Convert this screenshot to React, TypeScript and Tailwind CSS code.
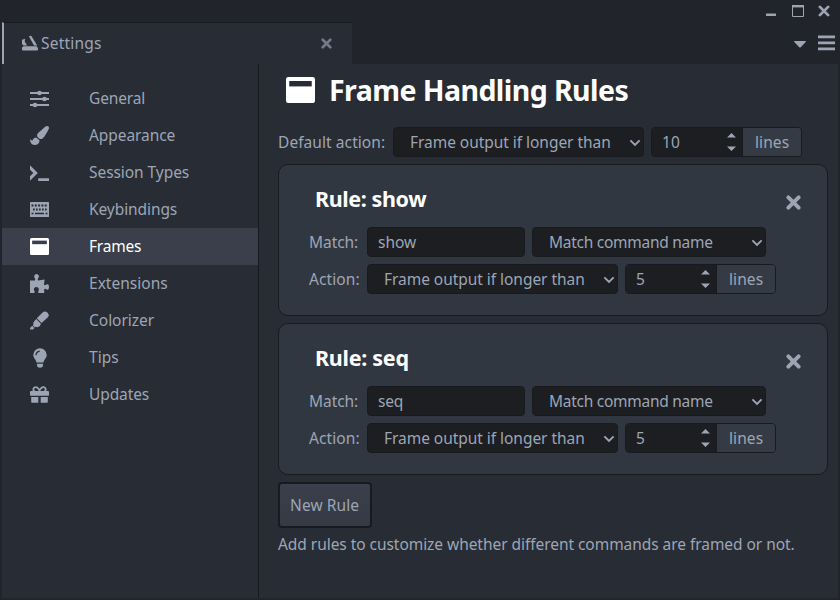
import React, { useLayoutEffect, useRef, useState } from "react";
import { FaPaintBrush, FaGift } from "react-icons/fa";

/** One line of text, tracked so that it fills the given advance width. */
function Line({ w, children, className = "" }: { w: number; children: string; className?: string }) {
  const ref = useRef<HTMLSpanElement>(null);
  const [tracking, setTracking] = useState(0);
  useLayoutEffect(() => {
    if (ref.current) {
      setTracking((w - 0.8 - ref.current.getBoundingClientRect().width) / children.length);
    }
  }, [w, children]);
  return (
    <span ref={ref} className={`inline-block shrink-0 whitespace-nowrap ${className}`} style={{ letterSpacing: tracking }}>
      {children}
    </span>
  );
}

const Sliders = () => (
  <svg width="19" height="18" viewBox="0 0 19 18" fill="currentColor">
    <path d="M0 2h19v2H0zM0 8h19v2H0zM0 14h19v2H0z" />
    <circle cx="9.5" cy="3" r="2.3" />
    <circle cx="14.5" cy="9" r="2.3" />
    <circle cx="5" cy="15" r="2.3" />
  </svg>
);

const Prompt = () => (
  <svg width="19" height="18" viewBox="0 0 19 18" fill="currentColor">
    <path d="M0 1.2 7.8 9 0 16.8v-4.5l3.3-3.3L0 5.7zM8.2 14.2H19V17H8.2z" />
  </svg>
);

const Keyboard = () => (
  <svg width="19" height="15" viewBox="0 0 19 15">
    <rect width="19" height="15" rx=".6" fill="currentColor" />
    <g stroke="#282c34" strokeWidth="2" fill="none">
      <path d="M1.5 3.5h16" strokeDasharray="2 1.3" />
      <path d="M3 7.5h14" strokeDasharray="1.7 1.3" />
      <path d="M1.5 11.5h2M5 11.5h9M15.5 11.5h2" strokeWidth="1.7" />
    </g>
  </svg>
);

const FrameIcon = ({ size, hole }: { size: number; hole: string }) => (
  <svg width={size} height={size * 0.9} viewBox="0 0 32 28.8" preserveAspectRatio="none">
    <rect width="32" height="28.8" rx="2.6" fill="#fff" />
    <path d="M3.6 4.4h24.8v6H3.6z" fill={hole} />
  </svg>
);

const Puzzle = () => (
  <svg width="19" height="19" viewBox="0 0 19 19" fill="currentColor">
    <path d="M0 6.500H4.800Q5.600 6 5 4.600 3.700 3 4.300 1.500 5 0 6.500 0T8.800 1.500Q9.300 3 8 4.600 7.300 6 8.200 6.400L14.600 5.600 14 10.500Q14.600 11.600 15.800 10.800 17.200 9.800 18.300 10.600 19 11.300 19 13T18.200 15.400Q17.200 16 15.900 15 14.600 14.400 14.200 15.400V19H8.500Q7.700 18 8.600 16.600 9.300 15 8.400 14 7.500 13.100 6.300 13.100T4.200 14Q3.400 15 4.200 16.600 5 18 4.400 19H0z" />
  </svg>
);

const Marker = () => (
  <svg width="19" height="19" viewBox="0 0 20 20" fill="currentColor">
    <path d="M7.2 7.6 13.2 1.5Q15.5-.7 18.3 1.7 21 4.6 18.6 6.8L12.2 12.6z" />
    <path d="M6.5 8.4 11.5 13.4 10.6 15.6Q8.6 17.8 6 16.7L5.1 17.3 2.9 15.1 3.6 14.2Q2.9 11.8 4.9 10.2z" />
    <path d="M2.3 15.6 4.5 17.8 3.4 19.6H.4Q-.2 18.5.3 17.7z" />
  </svg>
);

const Bulb = () => (
  <svg width="14" height="20" viewBox="0 0 14 20" fill="currentColor">
    <path d="M7 .3A6.7 6.7 0 0 1 13.7 7C13.7 10.3 10.9 11.3 10.5 14.5H3.5C3.1 11.3.3 10.3.3 7A6.7 6.7 0 0 1 7 .3zM4 15.8h6v1.500Q10 19.500 7 19.800 4 19.500 4 17.300z" />
    <path d="M3 7.3Q3.1 3.7 6.7 3.1" stroke="#282c34" strokeWidth="1.2" fill="none" />
  </svg>
);

const Cross = ({ size, stroke, className = "" }: { size: number; stroke: number; className?: string }) => (
  <svg width={size} height={size} viewBox="0 0 14 14" className={className} stroke="currentColor" strokeWidth={stroke} strokeLinecap="round">
    <path d="M2.2 2.2 11.8 11.8M11.8 2.2 2.2 11.8" />
  </svg>
);

const Chevron = () => (
  <svg width="12" height="8" viewBox="0 0 12 8" fill="none" stroke="currentColor" strokeWidth="1.9" className="mt-0.5">
    <path d="M1.4 1.3 6 5.9 10.6 1.3" />
  </svg>
);

const nav = [
  { label: "General", w: 57, icon: <Sliders /> },
  { label: "Appearance", w: 87, icon: <FaPaintBrush size={19} /> },
  { label: "Session Types", w: 101, icon: <Prompt /> },
  { label: "Keybindings", w: 89, icon: <Keyboard /> },
  { label: "Frames", w: 53, icon: <FrameIcon size={19} hole="#3a3f4b" />, active: true },
  { label: "Extensions", w: 79.5, icon: <Puzzle /> },
  { label: "Colorizer", w: 66, icon: <Marker /> },
  { label: "Tips", w: 30.5, icon: <Bulb /> },
  { label: "Updates", w: 61, icon: <FaGift size={19} /> },
];

function Select({ label, w, className }: { label: string; w: number; className: string }) {
  return (
    <div className={`flex h-[30px] items-center justify-between rounded-[4px] border border-[#181a1f] bg-[#1c1e22] pr-[2px] pl-4 ${className}`}>
      <Line w={w}>{label}</Line>
      <Chevron />
    </div>
  );
}

function LineCount({ value, w }: { value: string; w: number }) {
  return (
    <div className="flex h-[30px] w-[151px] overflow-hidden rounded-[4px] border border-[#181a1f]">
      <div className="flex w-[90px] items-center justify-between bg-[#1c1e22] pr-[6px] pl-[10px]">
        <Line w={w}>{value}</Line>
        <svg width="9" height="18" viewBox="0 0 9 18" fill="currentColor">
          <path d="M0 4.5 4.5 0 9 4.5zM0 13.5H9L4.5 18z" />
        </svg>
      </div>
      <div className="flex flex-1 items-center border-l border-[#181a1f] bg-[#353b45] pl-[12px]">
        <Line w={35}>lines</Line>
      </div>
    </div>
  );
}

function Rule({ name, titleWidth, nameWidth }: { name: string; titleWidth: number; nameWidth: number }) {
  return (
    <section className="h-[152px] rounded-[10px] border border-[#181a1f] bg-[#313741] pl-[30px]">
      <header className="flex h-[62px] items-center justify-between pt-[5px] pr-[26px] pl-[6px]">
        <Line w={titleWidth} className="text-[21.5px] font-bold text-white">{`Rule: ${name}`}</Line>
        <Cross size={15} stroke={3.6} className="mt-2" />
      </header>
      <div className="flex items-center">
        <div className="w-[58px]">
          <Line w={50}>Match:</Line>
        </div>
        <div className="flex h-[30px] w-[158px] items-center rounded-[4px] border border-[#181a1f] bg-[#1c1e22] pl-[10px]">
          <Line w={nameWidth}>{name}</Line>
        </div>
        <Select label="Match command name" w={164.5} className="ml-[7px] w-[234px]" />
      </div>
      <div className="mt-[7px] flex items-center">
        <div className="w-[58px]">
          <Line w={51.5}>Action:</Line>
        </div>
        <Select label="Frame output if longer than" w={201.5} className="mr-[7px] w-[251px]" />
        <LineCount value="5" w={9} />
      </div>
    </section>
  );
}

export default function App() {
  return (
    <div className="flex h-[600px] w-[840px] flex-col overflow-hidden bg-[#21252b] px-0.5 pb-0.5 font-['Noto_Sans',sans-serif] text-[15.5px] leading-[22px] text-[#9da5b4]">
      <div className="flex h-[22px] items-center justify-end gap-[14px] pr-[8px]">
        <svg width="10" height="12" viewBox="0 0 10 12" fill="currentColor">
          <rect y="8.5" width="10" height="2.5" rx=".5" />
        </svg>
        <svg width="12" height="12" viewBox="0 0 12 12" className="ml-[2px]">
          <path d="M.5 1v10.5h11V1" fill="none" stroke="currentColor" />
          <path d="M0 0h12v2.4H0z" fill="currentColor" />
        </svg>
        <Cross size={12} stroke={3.2} />
      </div>
      <div className="flex h-[42px] justify-between">
        <div className="flex w-[350px] items-center border-t border-l-2 border-t-[#181a1f] border-l-[#9da5b4] bg-[#282c34] pr-[20px] pb-[2px] pl-[18px]">
          <svg width="16" height="16" viewBox="0 0 16 16" fill="currentColor">
            <path d="M1.5 11.2h13.2l1.3 2V14.5q0 1-1 1H1q-1 0-1-1V12.6zM7 1.6Q8 .2 9.4.9L15.2 10.6H12zM0 4.8 3.4 3.8 2.7 5.6 3 7.5 4.5 8.7 4.3 10 5.6 10.6H1.5L0 9z" />
          </svg>
          <Line w={61.5} className="ml-[3px]">Settings</Line>
          <Cross size={11} stroke={3.4} className="mt-[1px] ml-auto opacity-65" />
        </div>
        <div className="flex items-center gap-[12px] pr-[3px]">
          <svg width="12" height="7" viewBox="0 0 12 7" fill="currentColor" className="mt-[2px]">
            <path d="M.5 0h11q.7.3.2 1L6.5 6.5h-1L.3 1Q-.2.3.5 0z" />
          </svg>
          <svg width="17" height="16" viewBox="0 0 17 16" fill="currentColor">
            <path d="M0 .5h17v2.7H0zM0 6.5h17v2.7H0zM0 12.5h17v2.7H0z" />
          </svg>
        </div>
      </div>
      <div className="flex min-h-0 flex-1 bg-[#282c34]">
        <nav className="w-[257px] border-r border-[#181a1f] pt-4">
          {nav.map((item) => (
            <div key={item.label} className={`flex h-[37px] items-center pb-[2px] pl-[27px] ${item.active ? "bg-[#3a3f4b] text-white" : ""}`}>
              <div className="mr-[39px] flex w-[21px] justify-center pt-[2px]">{item.icon}</div>
              <Line w={item.w}>{item.label}</Line>
            </div>
          ))}
        </nav>
        <main className="flex flex-1 flex-col pr-[10px] pl-[19px]">
          <h1 className="flex h-[63px] items-center pb-[11px] pl-[8px]">
            <FrameIcon size={29} hole="#282c34" />
            <Line w={300} className="ml-[14px] text-[28.5px] leading-[36px] font-bold text-white">Frame Handling Rules</Line>
          </h1>
          <div className="flex items-center">
            <div className="w-[115px]">
              <Line w={108}>Default action:</Line>
            </div>
            <Select label="Frame output if longer than" w={201.5} className="mr-[7px] w-[251px]" />
            <LineCount value="10" w={19} />
          </div>
          <div className="mt-[7px] flex flex-col gap-[7px]">
            <Rule name="show" titleWidth={112} nameWidth={39} />
            <Rule name="seq" titleWidth={94.5} nameWidth={26} />
          </div>
          <button className="mt-[7px] flex h-[46px] w-[94px] items-center rounded-[4px] border-2 border-[#181a1f] bg-linear-to-b from-[#3a3f4b] to-[#353b45] pl-[10px]">
            <Line w={70}>New Rule</Line>
          </button>
          <p className="mt-[5px]">
            <Line w={517.5}>Add rules to customize whether different commands are framed or not.</Line>
          </p>
        </main>
      </div>
    </div>
  );
}
